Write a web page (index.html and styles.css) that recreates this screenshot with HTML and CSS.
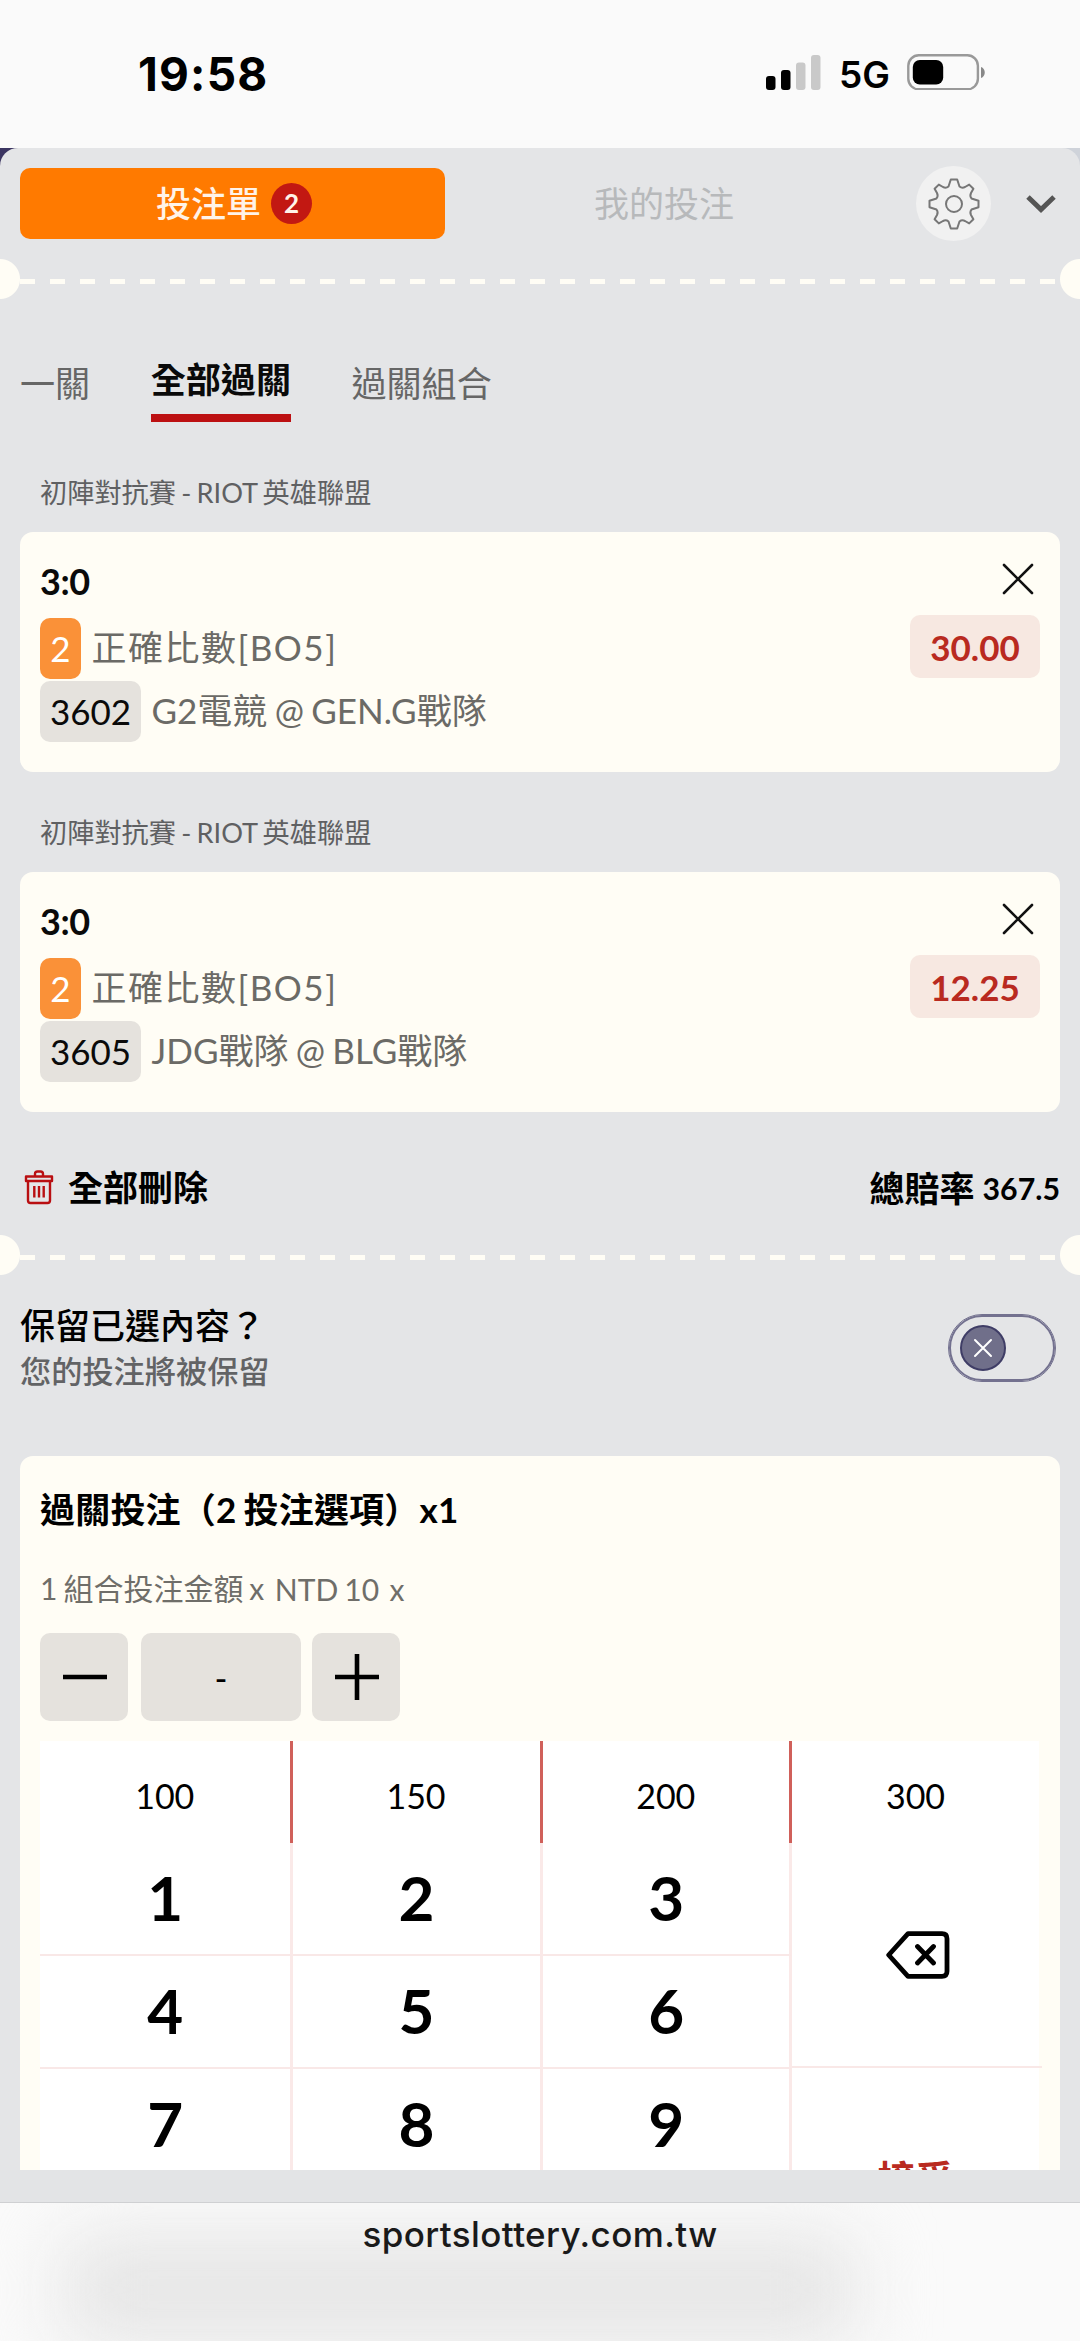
FILE: index.html
```html
<!DOCTYPE html>
<html lang="zh-Hant">
<head>
<meta charset="utf-8">
<title>投注單</title>
<link rel="stylesheet" href="styles.css">
</head>
<body>
<header class="status">
  <span class="time">19:58</span>
  <div class="signals">
    <svg class="bars" width="55" height="36" viewBox="0 0 55 36">
      <rect x="0" y="22" width="9.5" height="14" rx="3"/>
      <rect x="15" y="16" width="9.5" height="20" rx="3"/>
      <rect class="off" x="30" y="8.5" width="9.5" height="27.5" rx="3"/>
      <rect class="off" x="45" y="1" width="9.5" height="35" rx="3"/>
    </svg>
    <span class="net">5G</span>
    <svg class="battery" width="79" height="36" viewBox="0 0 79 36">
      <rect x="1.3" y="1.3" width="69.6" height="34" rx="10.5" fill="none" stroke="#999" stroke-width="2.4"/>
      <rect x="5.8" y="6" width="30.4" height="24.6" rx="7" fill="#000"/>
      <path d="M74 13c5 1.500 5 9.500 0 11z" fill="#888"/>
    </svg>
  </div>
</header>

<main class="page">
<div class="sheet">
  <nav class="top">
    <div class="slip">投注單<span class="count">2</span></div>
    <div class="mine">我的投注</div>
    <div class="gear">
      <svg width="52" height="52" viewBox="-26 -26 52 52" fill="none" stroke="#777" stroke-width="2" stroke-linejoin="round">
        <path d="M-3.200-24.500H3.200L5.500-17.500Q8-15.500 11-17L15.200-19.400L19.400-15.200L17-11Q15.500-8 17.500-5.500L24.500-3.200V3.200L17.500 5.500Q15.500 8 17 11L19.400 15.200L15.200 19.400L11 17Q8 15.500 5.500 17.500L3.200 24.500H-3.200L-5.500 17.500Q-8 15.500-11 17L-15.200 19.400L-19.400 15.200L-17 11Q-15.500 8-17.500 5.500L-24.500 3.200V-3.200L-17.500-5.500Q-15.500-8-17-11L-19.400-15.200L-15.200-19.400L-11-17Q-8-15.500-5.500-17.500Z"/>
        <circle r="8"/>
      </svg>
    </div>
    <svg class="chev" width="32" height="20" viewBox="0 0 32 20" fill="none" stroke="#555" stroke-width="5"><path d="M3 3L16 15.500L29 3"/></svg>
  </nav>
  <div class="tear"></div>

  <div class="tabs">
    <span class="tab">一關</span>
    <span class="tab active">全部過關</span>
    <span class="tab">過關組合</span>
  </div>

  <section class="bet">
    <h3 class="league">初陣對抗賽 - RIOT 英雄聯盟</h3>
    <div class="card">
      <div class="info">
        <div class="score">3:0</div>
        <div class="line"><span class="chip num">2</span><span class="market">正確比數[BO5]</span></div>
        <div class="line"><span class="chip code">3602</span><span>G2電競 @ GEN.G戰隊</span></div>
      </div>
      <div class="side">
        <svg width="32" height="32" viewBox="0 0 32 32" stroke="#111" stroke-width="2.600" stroke-linecap="round"><path d="M2 2L30 30M30 2L2 30"/></svg>
        <span class="odds">30.00</span>
      </div>
    </div>
  </section>
  <section class="bet">
    <h3 class="league">初陣對抗賽 - RIOT 英雄聯盟</h3>
    <div class="card">
      <div class="info">
        <div class="score">3:0</div>
        <div class="line"><span class="chip num">2</span><span class="market">正確比數[BO5]</span></div>
        <div class="line"><span class="chip code">3605</span><span>JDG戰隊 @ BLG戰隊</span></div>
      </div>
      <div class="side">
        <svg width="32" height="32" viewBox="0 0 32 32" stroke="#111" stroke-width="2.600" stroke-linecap="round"><path d="M2 2L30 30M30 2L2 30"/></svg>
        <span class="odds">12.25</span>
      </div>
    </div>
  </section>

  <div class="summary">
    <div class="clear">
      <svg width="30" height="36" viewBox="0 0 30 36" fill="none" stroke="#b90f12" stroke-width="2.400" stroke-linejoin="round">
        <path d="M2 7.500H28V12H2ZM4 12V31.500Q4 34 6.500 34H23.500Q26 34 26 31.500V12M11 7V5Q11 2.500 13.500 2.500H16.500Q19 2.500 19 5V7M10.300 17V28.500M15 17V28.500M19.700 17V28.500"/>
      </svg>
      <span>全部刪除</span>
    </div>
    <div class="total">總賠率 <span class="rate">367.5</span></div>
  </div>
  <div class="tear"></div>

  <div class="keep">
    <div>
      <div class="ask">保留已選內容？</div>
      <div class="hint">您的投注將被保留</div>
    </div>
    <div class="switch"><div class="knob">
      <svg width="20" height="20" viewBox="0 0 20 20" stroke="#fff" stroke-width="2" stroke-linecap="round"><path d="M2 2L18 18M18 2L2 18"/></svg>
    </div></div>
  </div>

  <section class="stake">
    <h2 class="combo">過關投注（2 投注選項）x1</h2>
    <div class="unit"><span>1 組合投注金額 x</span><span class="ntd">NTD 10</span><span class="ntd">x</span></div>
    <div class="stepper">
      <div class="step"><svg width="44" height="46" viewBox="0 0 44 46" stroke="#000" stroke-width="4.600"><path d="M0 23H44"/></svg></div>
      <div class="amount">-</div>
      <div class="step"><svg width="44" height="46" viewBox="0 0 44 46" stroke="#000" stroke-width="4.600"><path d="M0 23H44M22 0V46"/></svg></div>
    </div>
    <div class="pad">
      <div class="quick"><span>100</span><span>150</span><span>200</span><span>300</span></div>
      <div class="keys">
        <div class="digits">
          <span>1</span><span>2</span><span>3</span>
          <span>4</span><span>5</span><span>6</span>
          <span>7</span><span>8</span><span>9</span>
        </div>
        <div class="actions">
          <div class="del">
            <svg width="64" height="48" viewBox="0 0 64 48" fill="none" stroke="#000" stroke-width="4.800" stroke-linejoin="round" stroke-linecap="round"><path d="M22 2.700H56Q61 2.700 61 7.700V40.300Q61 45.300 56 45.300H22L2.700 24ZM31.500 15.500L47.500 32M47.500 15.500L31.500 32"/></svg>
          </div>
          <div class="accept">接受</div>
        </div>
      </div>
    </div>
  </section>
</div>
</main>

<footer class="browser">sportslottery.com.tw</footer>
</body>
</html>
```

FILE: styles.css
```css
* { box-sizing: border-box; }
body {
  margin: 0;
  width: 1080px;
  height: 2341px;
  overflow: hidden;
  display: flex;
  flex-direction: column;
  background: #fafafa;
  color: #000;
  font-family: Lato, "Noto Sans CJK TC", sans-serif;
  font-size: 35px;
  word-spacing: -1.700px;
}
h2, h3 { margin: 0; }
svg { display: block; flex: none; }

.status {
  flex: none;
  height: 148px;
  padding: 0 94px 0 138px;
  display: flex;
  justify-content: space-between;
  font-family: Inter, sans-serif;
}
.time { font-size: 46px; font-weight: 700; line-height: 54px; margin-top: 47px; letter-spacing: 1.200px; }
.signals { display: flex; margin-top: 54px; }
.bars .off { fill: #c9c9c9; }
.net { width: 86px; padding-left: 18px; font-size: 37px; font-weight: 600; line-height: 42px; }

.page {
  flex: none;
  height: 2055px;
  background: linear-gradient(90deg, #3b3561 50%, #cfd3da 50%);
  border-bottom: 1px solid #cfd0d2;
}
.sheet {
  height: 2022px;
  overflow: hidden;
  background: #e4e5e7;
  border-radius: 18px 18px 0 0;
  box-shadow: 0 32px 0 #e3e4e6;
}
.top { height: 111px; padding: 17px 23px 0 20px; display: flex; align-items: center; }
.top > * { margin-bottom: 17px; }
.slip {
  width: 425px; height: 71px;
  display: flex; align-items: center; justify-content: center;
  padding: 0 0 1px 3px;
  background: #ff7a00; border-radius: 10px;
  color: #fff3e8; font-weight: 500; line-height: 50px;
}
.count {
  width: 41px; height: 41px; margin-left: 10px;
  border-radius: 50%; background: #c21812;
  font-size: 26px; font-weight: 700; line-height: 41px; text-align: center;
}
.mine { flex: 1; padding: 0 33px 1px 0; text-align: center; color: #b7b9bb; line-height: 50px; }
.gear {
  width: 75px; height: 75px; border-radius: 50%; background: #f1f1f1;
  display: flex; align-items: center; justify-content: center;
}
.chev { margin-left: 34px; }

.tear {
  height: 40px;
  background:
    radial-gradient(circle at 0 50%, #fffdf5 19.500px, transparent 20.500px),
    radial-gradient(circle at 100% 50%, #fffdf5 19.500px, transparent 20.500px),
    repeating-linear-gradient(90deg, #fffdf5 0 15px, transparent 15px 30px) 20px 20px / 1040px 5px no-repeat;
}

.tabs { display: flex; gap: 60.500px; height: 174px; padding: 58px 20px 0; font-size: 35.100px; }
.tab { height: 56px; line-height: 52px; color: #666; }
.tab.active { height: 66px; margin-top: -1px; line-height: 46px; font-weight: 700; color: #0a0a0a; border-bottom: 8px solid #bc1012; }

.bet { height: 340px; }
.league { height: 59px; padding-left: 40px; font-size: 27.200px; font-weight: 400; line-height: 40px; color: #5f6062; }
.card {
  height: 240px; margin: 0 20px; padding: 20px;
  display: flex; justify-content: space-between;
  background: #fffdf5; border-radius: 13px;
}
.score { height: 66px; font-size: 36px; font-weight: 700; line-height: 58px; color: #0a0a0a; letter-spacing: -0.500px; }
.line { height: 61px; margin-bottom: 2px; display: flex; align-items: center; gap: 10.500px; color: #6b6a66; line-height: 47px; }
.line > :last-child { padding-bottom: 2px; }
.chip { height: 61px; border-radius: 10px; line-height: 61px; text-align: center; }
.num { width: 41px; background: #fa9138; color: #fff; }
.code { width: 101px; background: #e5e2dd; color: #0a0a0a; }
.market { letter-spacing: 1.500px; }
.side { display: flex; flex-direction: column; align-items: flex-end; }
.side svg { margin: 11px 6px 20px 0; }
.odds {
  width: 130px; height: 63px; border-radius: 10px;
  background: #f7e8e1; color: #b92a20;
  font-size: 35px; font-weight: 700; line-height: 64px; text-align: center;
}

.summary { height: 82px; display: flex; justify-content: space-between; align-items: center; padding: 0 20px 12px 24px; }
.clear, .total { display: flex; align-items: center; line-height: 50px; font-weight: 700; }
.clear { gap: 14px; padding-bottom: 2px; }
.total { gap: 8px; }
.rate { font-size: 30.300px; }

.keep { height: 181px; padding: 26px 25px 0 20px; display: flex; justify-content: space-between; }
.ask { font-weight: 500; line-height: 48px; }
.hint { font-size: 31.200px; font-weight: 500; line-height: 45px; color: #626365; }
.switch { width: 106px; height: 66px; margin-top: 14px; padding: 8px 9px; border: 2px solid #73718f; border-radius: 33px; outline: 0.500px solid #73718f; }
.knob { width: 46px; height: 46px; border: 2px solid #3f3d66; border-radius: 50%; background: #706f8a; display: flex; align-items: center; justify-content: center; }

.stake { height: 760px; margin: 0 20px; padding: 28px 20px 0; background: #fffdf5; border-radius: 13px; }
.combo { font-size: 35px; font-weight: 700; line-height: 50px; height: 82px; letter-spacing: 0.200px; }
.unit { display: flex; gap: 10.500px; height: 67px; font-size: 30px; line-height: 44px; color: #6f6e69; }
.ntd { margin-top: 1px; }
.stepper { display: flex; height: 108px; }
.step, .amount { height: 88px; border-radius: 10px; background: #e5e2dd; display: flex; align-items: center; justify-content: center; }
.step { width: 88px; padding-left: 2px; }
.amount { width: 160px; margin: 0 10.500px 0 13px; }
.pad { width: 999px; background: #fff; }
.quick { display: grid; grid-template-columns: 252.500px 250px 249.500px 247px; height: 102px; }
.quick span { border-right: 3px solid #d0605a; text-align: center; line-height: 110px; font-size: 34px; }
.quick span:last-child { border: 0; }
.keys { display: flex; }
.digits { width: 752px; display: grid; grid-template-columns: 252.500px 250px 249.500px; grid-auto-rows: 113px; }
.digits span { border-right: 3px solid #fae9e8; border-bottom: 2px solid #f9e8e7; padding-left: 1px; text-align: center; font-size: 62px; font-weight: 700; line-height: 109px; }
.actions { width: 247px; }
.del { height: 225px; margin-right: -3px; padding-left: 2px; display: flex; align-items: center; justify-content: center; border-bottom: 2px solid #f9e8e7; }
.accept { padding-top: 85px; text-align: center; font-size: 38px; font-weight: 700; line-height: 50px; color: #b92a20; }

.browser {
  flex: 1;
  position: relative;
  z-index: 0;
  overflow: hidden;
  background: #fafafa;
  color: #1a1a1a;
  text-align: center;
  font-family: Inter, sans-serif;
  font-size: 35px; font-weight: 500; line-height: 62px;
  letter-spacing: 0.400px;
}
/* soft shade behind the address */
.browser::before {
  content: "";
  position: absolute;
  z-index: -1;
  left: 62px; top: 32px;
  width: 795px; height: 110px;
  background: #e6e6e6;
  border-radius: 20px;
  filter: blur(36px);
}
```
